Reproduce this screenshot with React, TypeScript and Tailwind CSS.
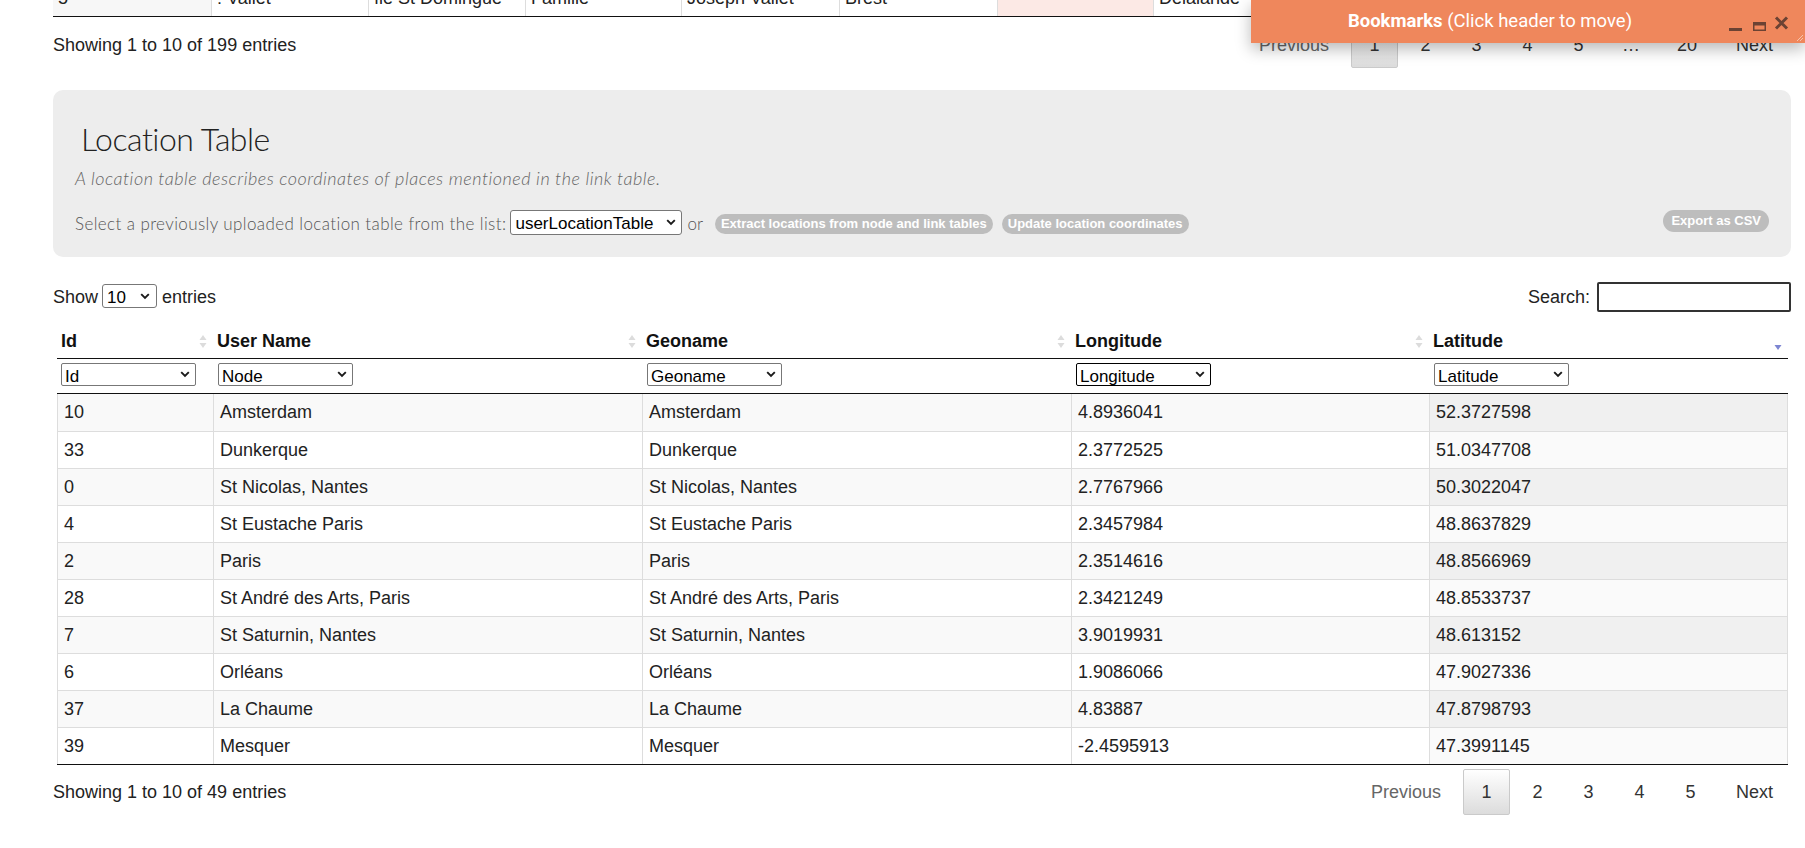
import React from "react";

const rows: [string, string, string, string, string][] = [
  ["10", "Amsterdam", "Amsterdam", "4.8936041", "52.3727598"],
  ["33", "Dunkerque", "Dunkerque", "2.3772525", "51.0347708"],
  ["0", "St Nicolas, Nantes", "St Nicolas, Nantes", "2.7767966", "50.3022047"],
  ["4", "St Eustache Paris", "St Eustache Paris", "2.3457984", "48.8637829"],
  ["2", "Paris", "Paris", "2.3514616", "48.8566969"],
  ["28", "St André des Arts, Paris", "St André des Arts, Paris", "2.3421249", "48.8533737"],
  ["7", "St Saturnin, Nantes", "St Saturnin, Nantes", "3.9019931", "48.613152"],
  ["6", "Orléans", "Orléans", "1.9086066", "47.9027336"],
  ["37", "La Chaume", "La Chaume", "4.83887", "47.8798793"],
  ["39", "Mesquer", "Mesquer", "-2.4595913", "47.3991145"],
];

const SortBoth = () => (
  <svg width="8" height="15" viewBox="0 0 8 15" className="shrink-0">
    <path d="M4 1 L7.5 6 H0.5Z" fill="#dcdcdc" />
    <path d="M4 14 L7.5 9 H0.5Z" fill="#dcdcdc" />
  </svg>
);

const SortDesc = () => (
  <svg width="8" height="15" viewBox="0 0 8 15" className="shrink-0 translate-y-[3px]">
    <path d="M4 13 L7.5 8 H0.5Z" fill="#7d86d2" />
  </svg>
);

const Chevron = () => (
  <svg width="10" height="7" viewBox="0 0 10 7">
    <path d="M1.2 1.2 L5 5 L8.8 1.2" stroke="#1a1a1a" strokeWidth="1.9" fill="none" />
  </svg>
);

function Sel({ value, cls, chev }: { value: string; cls: string; chev: string }) {
  return (
    <div className="relative">
      <select defaultValue={value} className={cls}>
        <option>{value}</option>
      </select>
      <span className={chev}>
        <Chevron />
      </span>
    </div>
  );
}

function Pagination({ top }: { top?: boolean }) {
  return (
    <div className="flex items-center text-[18px]">
      <span className="px-[18px] text-[#666]">Previous</span>
      <span className="ml-[4px] flex h-[46px] w-[47px] items-center justify-center rounded-[2px] border border-[#cacaca] bg-linear-to-b from-white to-[#dcdcdc] text-[#333]">
        1
      </span>
      {["2", "3", "4", "5"].map((n) => (
        <span key={n} className="ml-[4px] flex h-[46px] w-[47px] items-center justify-center text-[#333]">
          {n}
        </span>
      ))}
      {top && (
        <>
          <span className="ml-[4px] flex h-[46px] w-[50px] items-center justify-center text-[#333]">…</span>
          <span className="ml-[4px] flex h-[46px] items-center justify-center px-[17px] text-[#333]">20</span>
        </>
      )}
      <span className="ml-[4px] px-[18px] text-[#333]">Next</span>
    </div>
  );
}

export default function App() {
  const topCells = [
    { t: "5", w: "w-[158px] bg-[#f7f7f7]" },
    { t: ": Vallet", w: "w-[157px] bg-white" },
    { t: "île St Domingue", w: "w-[157px] bg-white" },
    { t: "Famille", w: "w-[156px] bg-white" },
    { t: "Joseph Vallet", w: "w-[158px] bg-white" },
    { t: "Brest", w: "w-[158px] bg-white" },
    { t: "", w: "w-[156px] bg-[#fce9e5]" },
    { t: "Delalande", w: "w-[158px] bg-white" },
    { t: "", w: "flex-1 bg-white" },
  ];

  return (
    <div className="relative h-[848px] w-[1805px] overflow-hidden bg-white font-['Liberation_Sans',Arial,sans-serif] text-[18px] text-[#333]">
      <div className="ml-[53px] w-[1738px]">
        {/* partial previous table */}
        <div className="-mt-[20px] flex h-[37px] border-b border-[#111]">
          {topCells.map((c, i) => (
            <div
              key={i}
              className={`${c.w} flex h-full items-center border-l border-[#ddd] pl-[5px] text-[#222] first:border-l-0`}
            >
              {c.t}
            </div>
          ))}
        </div>
        <div className="mt-[5px] flex h-[46px] items-center justify-between">
          <div className="text-[#222]">Showing 1 to 10 of 199 entries</div>
          <Pagination top />
        </div>

        {/* Location table panel */}
        <div className="mt-[22px] rounded-[10px] bg-[#ededed] px-[22px] pb-[21px] pt-[30px]">
          <h2 className="ml-[6px] font-['Lato',sans-serif] text-[32px] font-light leading-[38px] tracking-[-0.5px] text-[#222]">
            Location Table
          </h2>
          <p className="mt-[9px] font-['Lato',sans-serif] text-[18px] font-light italic leading-[22px] tracking-[0.5px] text-[#666]">
            A location table describes coordinates of places mentioned in the link table.
          </p>
          <div className="mt-[22px] flex h-[25px] items-center">
            <span className="font-['Lato',sans-serif] text-[17px] font-light tracking-[0.4px] text-[#555]">
              Select a previously uploaded location table from the list:
            </span>
            <div className="ml-[4px]">
              <Sel
                value="userLocationTable"
                cls="h-[25px] w-[172px] appearance-none rounded-[3px] border border-[#777] bg-white pl-[4px] text-[17px] text-black"
                chev="pointer-events-none absolute right-[6px] top-[9px]"
              />
            </div>
            <span className="ml-[5px] font-['Lato',sans-serif] text-[17px] font-light text-[#555]">or</span>
            <span className="ml-[12px] flex h-[20px] items-center rounded-full bg-[#bdbdbd] px-[6px] text-[13px] font-bold text-white">
              Extract locations from node and link tables
            </span>
            <span className="ml-[9px] flex h-[20px] items-center rounded-full bg-[#bdbdbd] px-[6px] text-[13px] font-bold text-white">
              Update location coordinates
            </span>
            <span className="ml-auto -mt-[6px] flex h-[22px] items-center rounded-full bg-[#bdbdbd] px-[8px] text-[13px] font-bold text-white">
              Export as CSV
            </span>
          </div>
        </div>

        {/* show / search */}
        <div className="mt-[25px] flex h-[30px] items-center justify-between">
          <div className="flex items-center text-[#222]">
            <span>Show</span>
            <div className="ml-[4px]">
              <Sel
                value="10"
                cls="h-[24px] w-[55px] appearance-none rounded-[3px] border border-[#777] bg-white pl-[4px] text-[17px] text-black"
                chev="pointer-events-none absolute right-[7px] top-[9px]"
              />
            </div>
            <span className="ml-[5px]">entries</span>
          </div>
          <div className="flex items-center text-[#222]">
            <span>Search:</span>
            <input className="ml-[7px] h-[30px] w-[194px] rounded-[2px] border-2 border-[#333] bg-white" />
          </div>
        </div>

        {/* main table */}
        <div className="ml-[4px] mt-[8px] w-[1731px]">
          <div className="grid h-[39px] grid-cols-[156px_429px_429px_358px_359px] border-b border-[#111] pt-[4px] font-bold text-[#111]">
            {["Id", "User Name", "Geoname", "Longitude", "Latitude"].map((h, i) => (
              <div key={h} className="flex items-center justify-between pl-[4px] pr-[6px]">
                <span>{h}</span>
                {i === 4 ? <SortDesc /> : <SortBoth />}
              </div>
            ))}
          </div>
          <div className="grid h-[35px] grid-cols-[156px_429px_429px_358px_359px] border-b border-[#111]">
            {["Id", "Node", "Geoname", "Longitude", "Latitude"].map((h, i) => (
              <div key={h} className={i === 0 ? "flex items-center pl-[4px]" : "flex items-center pl-[5px]"}>
                <Sel
                  value={h}
                  cls={
                    i === 3
                      ? "h-[23px] w-[135px] appearance-none rounded-[2px] border border-black bg-white pl-[3px] text-[17px] text-black"
                      : "h-[23px] w-[135px] appearance-none rounded-[2px] border border-[#777] bg-white pl-[3px] text-[17px] text-black"
                  }
                  chev="pointer-events-none absolute right-[6px] top-[8px]"
                />
              </div>
            ))}
          </div>
          <div className="border-b border-[#111]">
            {rows.map((r, ri) => {
              const odd = ri % 2 === 0;
              return (
                <div
                  key={ri}
                  className={
                    ri === 0
                      ? "grid h-[37px] grid-cols-[156px_429px_429px_358px_359px]"
                      : "grid h-[37px] grid-cols-[156px_429px_429px_358px_359px] border-t border-[#ddd]"
                  }
                >
                  {r.map((c, ci) => (
                    <div
                      key={ci}
                      className={`flex items-center border-l border-[#ddd] pl-[6px] text-[#222] ${
                        ci === 4 ? "border-r" : ""
                      } ${
                        ci === 4
                          ? odd
                            ? "bg-[#f0f0f0]"
                            : "bg-[#fafafa]"
                          : odd
                          ? "bg-[#f9f9f9]"
                          : "bg-white"
                      }`}
                    >
                      {c}
                    </div>
                  ))}
                </div>
              );
            })}
          </div>
        </div>

        <div className="mt-[4px] flex h-[46px] items-center justify-between">
          <div className="text-[#222]">Showing 1 to 10 of 49 entries</div>
          <Pagination />
        </div>
      </div>

      {/* Bookmarks floating panel */}
      <div className="absolute left-[1251px] top-0 flex h-[43px] w-[554px] items-center bg-[#ef875c] font-['Roboto',sans-serif] text-white shadow-[0_6px_16px_rgba(0,0,0,0.28)]">
        <div className="flex-1 text-center text-[18.5px]">
          <span className="font-bold">Bookmarks</span> (Click header to move)
        </div>
        <div className="flex h-full w-[76px] items-start pt-[17px]">
          <svg width="14" height="14" viewBox="0 0 14 14">
            <rect x="0" y="11" width="13" height="3" fill="#6b4233" />
          </svg>
          <svg width="14" height="14" viewBox="0 0 14 14" className="ml-[10px]">
            <rect x="0.75" y="5.75" width="11.5" height="7.5" fill="none" stroke="#6b4233" strokeWidth="1.5" />
            <rect x="0" y="5" width="13" height="3.5" fill="#6b4233" />
          </svg>
          <svg width="15" height="14" viewBox="0 0 15 14" className="ml-[7px] -mt-[1px]">
            <path d="M2 1.5 L13 12.5 M13 1.5 L2 12.5" stroke="#6b4233" strokeWidth="3" />
          </svg>
        </div>
        <svg width="8" height="8" viewBox="0 0 8 8" className="absolute bottom-[1px] right-[1px]">
          <path d="M7 1 L1 7 M7 4 L4 7" stroke="#f7c3ac" strokeWidth="1" />
        </svg>
      </div>
    </div>
  );
}
